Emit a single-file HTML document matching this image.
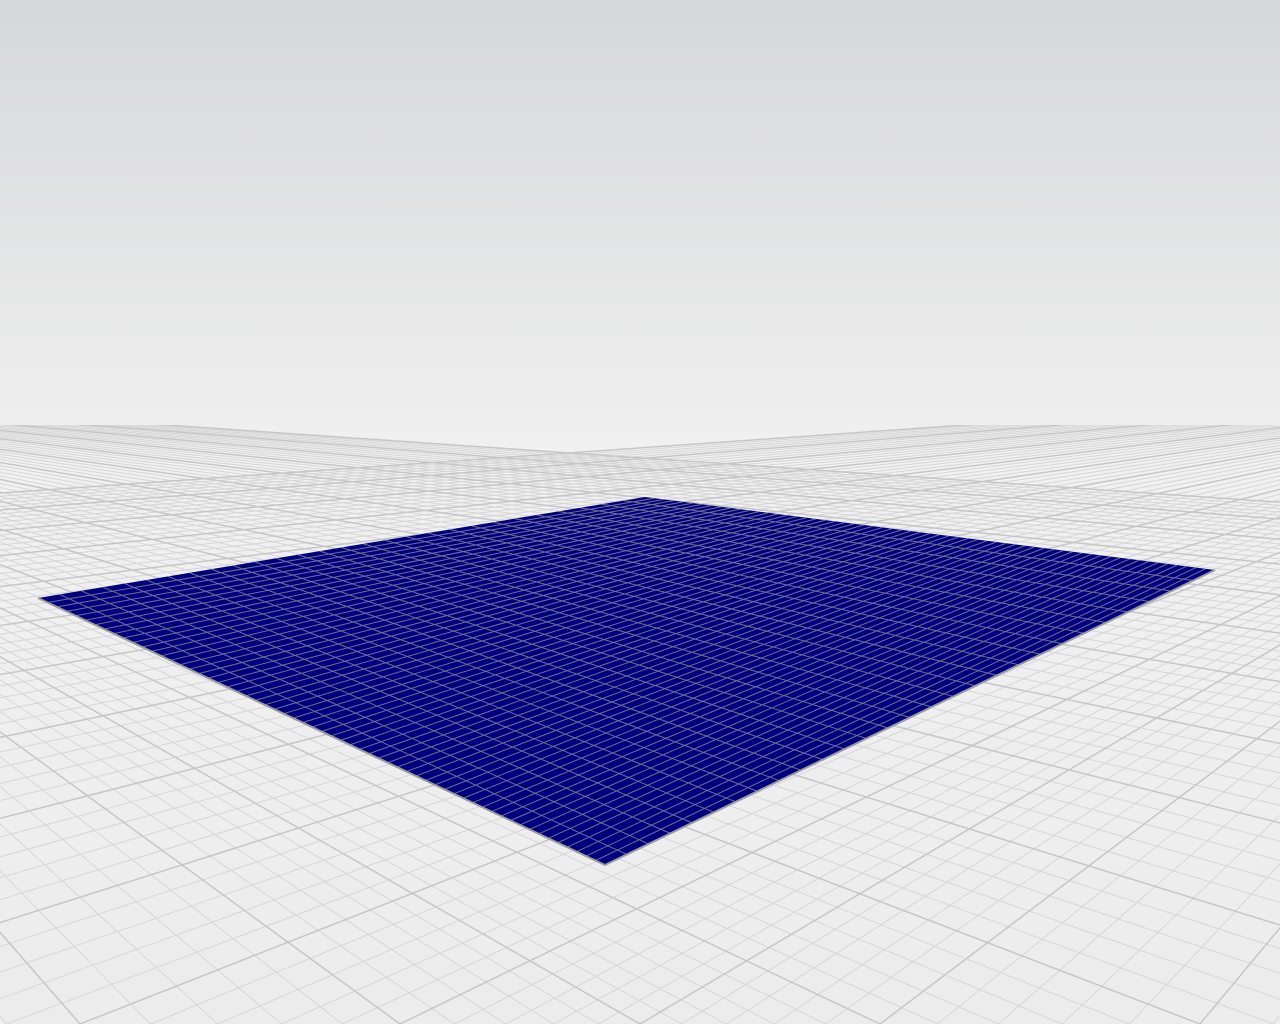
<!DOCTYPE html><html><head><style>html,body{margin:0;padding:0;width:1280px;height:1024px;overflow:hidden}</style></head><body>
<svg id="s" width="1280" height="1024" xmlns="http://www.w3.org/2000/svg" style="display:block">
<defs>
<linearGradient id="bg" x1="0" y1="0" x2="0" y2="1">
<stop offset="0" stop-color="#d6d7d9"/><stop offset="0.41" stop-color="#eeeeee"/><stop offset="0.44" stop-color="#f1f1f1"/><stop offset="1" stop-color="#ececec"/>
</linearGradient>
<clipPath id="gc"><rect x="0" y="425" width="1280" height="600"/></clipPath>
</defs>
<rect width="1280" height="1024" fill="url(#bg)"/>
<g clip-path="url(#gc)">
<g id="floor" stroke="#d6d6d6" stroke-width="1" fill="none"></g>
<g id="major" stroke="#c6c6c6" stroke-width="1.5" fill="none"></g>
</g>
<polygon points="38,598 645,497 1215,570 605,865" fill="#00007f"/>
<g id="field" stroke="#8a8a9a" stroke-width="1" fill="none" opacity="0.8"></g>
<polyline points="38,598 605,865 1215,570" stroke="#9a9aa0" stroke-width="2" fill="none"/>
</svg>
<script>
var NS="http://www.w3.org/2000/svg";
function ln(g,x1,y1,x2,y2){var l=document.createElementNS(NS,"line");l.setAttribute("x1",x1);l.setAttribute("y1",y1);l.setAttribute("x2",x2);l.setAttribute("y2",y2);document.getElementById(g).appendChild(l);}
var V1=[-482,380],V2=[1744,370];
function fan(V,dir){
 for(var i=-60;i<=60;i++){
  var x=640+dir*i*Math.abs(i)*1.6+dir*i*40;
  var y=1024;
  var dx=x-V[0],dy=y-V[1];
  var x2=V[0]+dx*3,y2=V[1]+dy*3;
  ln(i%5==0?"major":"floor",V[0],V[1],x2,y2);
 }
}
fan(V1,1);fan(V2,-1);
function bil(u,v){var A=[38,598],B=[645,497],C=[1215,570],D=[605,865];
 var x=(1-u)*(1-v)*A[0]+u*(1-v)*B[0]+u*v*C[0]+(1-u)*v*D[0];
 var y=(1-u)*(1-v)*A[1]+u*(1-v)*B[1]+u*v*C[1]+(1-u)*v*D[1];return [x,y];}
for(var i=1;i<28;i++){var u=i/28,p=bil(u,0),q=bil(u,1);ln("field",p[0],p[1],q[0],q[1]);}
for(var j=1;j<60;j++){var v=j/60,p=bil(0,v),q=bil(1,v);ln("field",p[0],p[1],q[0],q[1]);}
</script>
</body></html>
